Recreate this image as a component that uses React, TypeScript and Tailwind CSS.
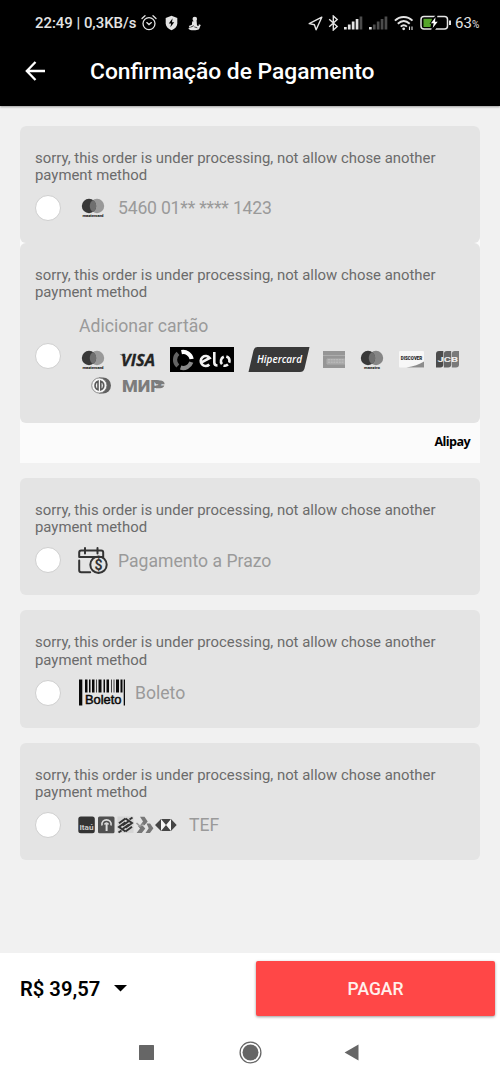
import type { ReactNode } from "react"

const NOTICE = "sorry, this order is under processing, not allow chose another payment method"

function StatusBar() {
  return (
    <div className="flex h-[46px] items-center pl-[35px] text-[#e4e4e4]">
      <span className="w-[106px] whitespace-nowrap text-[14.9px] font-medium">22:49 | 0,3KB/s</span>
      {/* alarm */}
      <svg width="16" height="18" viewBox="0 0 16 18" fill="none" stroke="currentColor" strokeWidth="1.3" strokeLinecap="round">
        <circle cx="8" cy="9.6" r="6" />
        <path d="M1 4.5 4 1.8M15 4.5 12 1.8M5.8 8.6 8 10.6l2.4-2" />
      </svg>
      <svg className="ml-2" width="13" height="16" viewBox="0 0 13 16">
        <path d="M6.5.8 12.3 3v5.2c0 3.2-2.3 5.6-5.8 7C3 13.8.7 11.4.7 8.2V3z" fill="currentColor" />
        <path d="M7.6 3.3 3.8 8.5h2.3l-.7 3.7 3.8-5H7z" fill="#000" />
      </svg>
      <svg className="ml-[10px]" width="13" height="15" viewBox="0 0 13 15" fill="currentColor">
        <circle cx="6.8" cy="3" r="2.3" />
        <path d="M4.2 5.5 8.6 4.6 9 9.5l1.600.4.2-1.700 2 .7-.7 1.600-.8 2.300c-.8 1-2 1.400-4 1.400H3.600C1.700 14.200.6 13.300.5 12l1.300-.3-1-1.700 3.100-1.300z" />
        <path d="M2.400 11.300l3.400-1.600M6.300 10.900l3 .9" stroke="#000" strokeWidth=".7" />
      </svg>

      <svg className="ml-[107px]" width="15" height="15" viewBox="0 0 15 15" fill="none" stroke="currentColor" strokeWidth="1.4" strokeLinejoin="round">
        <path d="M13.8 1.2 1.2 7.6l5.2 1.2 1.7 5z" />
      </svg>
      <svg className="ml-[5px]" width="11" height="16" viewBox="0 0 11 16" fill="none" stroke="currentColor" strokeWidth="1.4">
        <path d="m1.2 4.3 8 7.2-3.9 3.5V1l3.9 3.5-8 7.2" />
      </svg>
      <Signal className="ml-[5px]" strength={4} />
      <Signal className="ml-[6px]" strength={1} />
      <svg className="ml-[6px]" width="20" height="16" viewBox="0 0 20 16" fill="none" stroke="currentColor" strokeWidth="1.9">
        <path d="M.9 5.7c5-5 12.6-5 17.6 0M3.8 8.8c3.7-3.5 8.2-3.5 11.9 0M6.7 11.6c2-1.8 4.2-1.8 6.2 0" />
        <circle cx="9.7" cy="13.8" r="1.4" fill="currentColor" stroke="none" />
        <path d="M15.5 11.5V15M18 11.5V15" strokeWidth="1.1" />
      </svg>
      <svg className="ml-[6px]" width="32" height="16" viewBox="0 0 32 16">
        <rect x="1" y="1.5" width="26.5" height="12.5" rx="3" fill="none" stroke="currentColor" strokeWidth="1.5" />
        <path d="M3.5 3.7H12l-1.500 8.200h-7z" fill="#55a52b" />
        <path d="M15.6 0 9.5 8.8h3.3L11 16h3.6l5-9h-3.3L17.5 0z" fill="#000" />
        <path d="M15.5 2.2 11 8.3h2.7l-1 4.7 5-6.300H15z" fill="#fff" />
        <path d="M30 5.500v4.500" stroke="currentColor" strokeWidth="2" />
      </svg>
      <span className="ml-[3px] text-[15px]">
        63<span className="text-[10px]">%</span>
      </span>
    </div>
  )
}

function Signal({ strength, className }: { strength: number; className: string }) {
  const bars = [2.5, 5, 8, 10.5, 13]
  return (
    <svg className={className} width="19" height="14" viewBox="0 0 19 14">
      {bars.map((h, i) => (
        <rect key={h} x={i * 3.9} y={13.5 - h} width="2.7" height={h} fill={i < strength ? "#e4e4e4" : "#4c4c4c"} />
      ))}
    </svg>
  )
}

function Circles({ label, className, right = "#999" }: { label: string; className?: string; right?: string }) {
  return (
    <svg className={className} width="24" height="20" viewBox="0 0 24 20">
      <circle cx="16" cy="8" r="7.2" fill={right} />
      <circle cx="8" cy="8" r="7.2" fill="#383838" />
      <path d="M12 2a7.2 7.2 0 0 1 0 12 7.2 7.2 0 0 1 0-12z" fill="#6f6f6f" />
      <text x="12" y="19" textAnchor="middle" fontSize="4.3" fontWeight="800" fill="#222" textLength={label === "maestro" ? 16 : 21}>
        {label}
      </text>
    </svg>
  )
}

function CardBrands() {
  return (
    <div className="pl-[2px]">
      <div className="flex h-[26px] items-center">
        <Circles label="mastercard" />
        <svg className="ml-[11px]" width="44" height="20" viewBox="0 0 44 20">
          <path d="M3.5 4.5H8l2 4Q7.500 5.500 3.500 4.500z" fill="#242424" />
          <text x="5" y="15.8" fontFamily="Open Sans" fontSize="15.5" fontStyle="italic" fontWeight="700" fill="#242424" stroke="#242424" strokeWidth=".3" textLength="34" lengthAdjust="spacingAndGlyphs">
            VISA
          </text>
        </svg>
        <svg className="ml-[10px]" width="64" height="25" viewBox="0 0 64 25">
          <path d="M0 0h64v25H0z" fill="#000" />
          <g fill="none" strokeWidth="4.2">
            <path d="M11.5 5.100a8.500 8.500 0 0 1 10.100 6.900" stroke="#fff" />
            <path d="M21.3 15.200a8.500 8.500 0 0 1-10.700 5.400" stroke="#8a8a8a" />
            <path d="M7.8 19a8.500 8.500 0 0 1 .2-12.700" stroke="#636363" />
          </g>
          <g fill="none" stroke="#f2f2f2" strokeWidth="2.6">
            <path d="M31 15.700 39.700 11a5 5 0 1 0-.4 6.500M44.300 5v10.500c0 2 1 3 3.200 3M53.800 9.700a4.700 4.700 0 0 0-1.800 7.400M53.500 18.400a4.700 4.700 0 0 0 4.500-.8M56.300 9.400c2 .6 3.200 2.200 3.200 4.300 0 .8-.1 1.400-.4 2" />
          </g>
        </svg>
        <svg className="ml-[14px]" width="62" height="25" viewBox="0 0 62 25">
          <path d="M9.500 0H61.500L56.500 21.500Q55.500 25 52 25H.5L5.500 3.500Q6.300 0 9.500 0z" fill="#393939" />
          <text x="9" y="16" fontFamily="Open Sans" fontSize="11" fontStyle="italic" fontWeight="600" fill="#fff" textLength="45" lengthAdjust="spacingAndGlyphs">
            Hipercard
          </text>
        </svg>
        <svg className="ml-[13px]" width="22" height="17" viewBox="0 0 22 17">
          <path d="M0 0h22v17H0z" fill="#969696" />
          <path d="M0 4.5h22M4 8h18v5H4z" stroke="#adadad" strokeWidth="1" fill="#a8a8a8" />
          <path d="M5 8.8h16M5 11.2h16" stroke="#c0c0c0" strokeWidth="1" strokeDasharray="2 .7" />
        </svg>
        <Circles className="ml-[15px]" label="maestro" right="#868686" />
        <svg className="ml-[15px]" width="26" height="17" viewBox="0 0 26 17">
          <rect width="25" height="16.5" rx="1" fill="#f7f7f7" />
          <path d="M25 10.5V16.5H7.500Q18 14.800 25 10.500z" fill="#8c8c8c" />
          <text x="1.8" y="9" fontFamily="Roboto" fontSize="4.6" fontWeight="900" fill="#222" textLength="21.5" lengthAdjust="spacingAndGlyphs">
            DISCOVER
          </text>
        </svg>
        <svg className="ml-[11px]" width="23" height="17" viewBox="0 0 23 17">
          <path d="M3 0h4.300v13.500q0 3-3 3H0V3q0-3 3-3z" fill="#4c4c4c" />
          <path d="M10.800 0h4.400v13.500q0 3-3 3H7.900V3q0-3 2.900-3z" fill="#666" />
          <path d="M18.700 0H23v13.500q0 3-3 3h-4.200V3q0-3 2.900-3z" fill="#7a7a7a" />
          <text x="1.5" y="11.3" fontFamily="Roboto" fontSize="8" fontWeight="700" fill="#eee" textLength="20.5" lengthAdjust="spacingAndGlyphs">
            JCB
          </text>
        </svg>
      </div>
      <div className="flex h-[26px] items-center pl-[10px]">
        <svg width="20" height="17" viewBox="0 0 20 17">
          <path d="M8 .5h4a8 8 0 0 1 0 16H8z" fill="#606060" />
          <circle cx="8.3" cy="8.5" r="7.6" fill="#f5f5f5" stroke="#777" strokeWidth=".8" />
          <path d="M7 4.200a4.600 4.600 0 0 0 0 8.600zM9.800 4.200a4.600 4.600 0 0 1 0 8.600z" fill="none" stroke="#5a5a5a" strokeWidth="1.6" />
        </svg>
        <svg className="ml-[9px]" width="47" height="20" viewBox="0 0 47 20">
          <text x="2" y="15.8" fontFamily="Roboto" fontSize="16" fontWeight="900" fill="#7c7c7c" textLength="40" lengthAdjust="spacingAndGlyphs">
            МИР
          </text>
          <path d="M34 4.400h7q3.500.4 3.600 3.800H36z" fill="#7c7c7c" />
          <path d="M36 9.500h8.300q-1 2.800-4 2.800H36z" fill="#7c7c7c" />
        </svg>
      </div>
    </div>
  )
}

function InstallmentIcon() {
  return (
    <svg width="30" height="27" viewBox="0 0 30 27" fill="none" stroke="#333" strokeWidth="2" strokeLinecap="round">
      <path d="M1.2 10V5.500q0-2 2-2h20q2 0 2 2V10h-24M1.200 13.500v9.800q0 2 2 2h9M7 1v5.500M19.500 1v5.500" />
      <circle cx="20.5" cy="17.7" r="8.2" />
      <text x="20.5" y="22.7" textAnchor="middle" fontSize="14" fontWeight="700" fill="#333" stroke="none">
        $
      </text>
    </svg>
  )
}

function BoletoIcon() {
  const bars = [[6, 2.5], [10, 1.5], [13, 2.5], [17, 1], [19.5, 3], [24.5, 1.5], [27.5, 2.5], [32, 1], [34.5, 1], [37, 3], [41.5, 2]]
  return (
    <svg width="46" height="27" viewBox="0 0 46 27">
      <path d="M0 .5h3.300v26H0zM44.700.5H46v26h-1.300z" fill="#0a0a0a" />
      {bars.map(([x, w]) => (
        <rect key={x} x={x} y=".5" width={w} height="13" fill={w === 1 ? "#444" : "#0a0a0a"} />
      ))}
      <text x="6" y="25" fontFamily="Liberation Sans" fontSize="12.5" fill="#0a0a0a" stroke="#0a0a0a" strokeWidth=".5" textLength="36.5" lengthAdjust="spacingAndGlyphs">
        Boleto
      </text>
    </svg>
  )
}

function BankIcons() {
  return (
    <svg width="99" height="18" viewBox="0 0 99 18">
      <rect x=".3" y=".5" width="16.5" height="16.8" rx="2.5" fill="#343434" />
      <text x="1.5" y="14" fontSize="8" fontWeight="700" fill="#ccc" textLength="14" lengthAdjust="spacingAndGlyphs">
        Itaú
      </text>
      <rect x="20" y=".5" width="16.5" height="16.8" rx="1.5" fill="#515151" />
      <path d="M24 9.500c-1.500-7.500 10.500-7.500 9 0M26.500 8.500q2-3 4 0" fill="none" stroke="#ddd" strokeWidth="1.6" />
      <path d="M27.600 7.500h2v7.500h-2z" fill="#ddd" />
      <path d="M39.500.5h16v16.500h-16z" fill="#d5d5d5" />
      <g fill="none" stroke="#333" strokeWidth="2">
        <path d="m47.500 2.500 6.500 4.500-6.500 4.800M47.500 15.500 41 11l6.500-4.800" />
        <path d="M41 7.300l6.500-4.800M54 10.700l-6.500 4.800M44.500 9.500l6.500-4.500M44.500 13l6.500-4.500M51.500 3.500l3-2M40.500 16.500l3-2" />
      </g>
      <g fill="#777">
        <path d="M62 .8h4.500l3.200 4.600-3.200 3.800H62.200l2.800-3.800z" />
        <path d="M60 10h5l2.300 2.400-3.500 4.500H58.600l3.400-4.500z" />
        <path d="M68.500 7.500h3.600l3.300 4.800-3.400 4.600h-4.500l3.200-4.600z" />
      </g>
      <path d="m58.500 7 3.500 3.300 3.500-2.500" fill="none" stroke="#999" strokeWidth="1.6" />
      <path d="M83 3h10v12H83z" fill="#f7f7f7" />
      <path d="M77 9l6-6v12zM98.700 9 93 3v12zM83 3h10L88 9zM83 15h10L88 9z" fill="#454545" />
    </svg>
  )
}

function Radio() {
  return <span className="size-[26px] shrink-0 rounded-full border border-[#cfcfcf] bg-white" />
}

function Notice() {
  return <p className="text-[14.9px] leading-[17.5px] text-[#6b6b6b]">{NOTICE}</p>
}

function PaymentCard({ children }: { children: ReactNode }) {
  return (
    <div className="h-[117.4px] rounded-[6px] bg-[#e4e4e4] px-[15px] pt-[24px]">
      <Notice />
      <div className="flex h-[47px] items-center text-[17.6px] text-[#9a9a9a]">
        <Radio />
        {children}
      </div>
    </div>
  )
}

export default function App() {
  return (
    <div className="flex h-[1082px] w-[500px] flex-col bg-[#f1f1f1] font-[Roboto,sans-serif]">
      <header className="h-[106px] bg-black shadow-[0_1px_2px_rgba(0,0,0,0.35)]">
        <StatusBar />
        <div className="flex h-[50px] items-center pl-[25px] text-white">
          <svg width="21" height="20" viewBox="0 0 21 20" fill="none" stroke="currentColor" strokeWidth="2.3">
            <path d="M20 10H2M10.500 1 1.800 10l8.700 9" />
          </svg>
          <h1 className="ml-[44px] pt-[3px] text-[22.8px] font-medium">Confirmação de Pagamento</h1>
        </div>
      </header>

      <main className="flex flex-1 flex-col gap-[15px] px-5 pt-[19.5px]">
        <section className="rounded-t-[6px] bg-[#fbfbfb]">
          <PaymentCard>
            <Circles className="ml-[20px]" label="mastercard" />
            <span className="ml-[13px] tracking-[-0.2px]">5460 01** **** 1423</span>
          </PaymentCard>
          <div className="h-[180px] rounded-[6px] bg-[#e4e4e4] pl-[15px] pt-[24px]">
            <div className="pr-[15px]">
              <Notice />
            </div>
            <div className="mt-[12px] flex items-center">
              <Radio />
              <div className="ml-[18px]">
                <div className="h-[33px] text-[17.6px] leading-[24px] text-[#9a9a9a]">Adicionar cartão</div>
                <CardBrands />
              </div>
            </div>
          </div>
          <div className="flex h-10 items-center justify-end pr-[10px] font-['Open_Sans',sans-serif] text-[12.6px] font-bold tracking-[-0.6px] text-black">
            Alipay
          </div>
        </section>

        <PaymentCard>
          <span className="ml-[17px]">
            <InstallmentIcon />
          </span>
          <span className="ml-[10px] pt-px">Pagamento a Prazo</span>
        </PaymentCard>
        <PaymentCard>
          <span className="ml-[18px]">
            <BoletoIcon />
          </span>
          <span className="ml-[10px]">Boleto</span>
        </PaymentCard>
        <PaymentCard>
          <span className="ml-[17px]">
            <BankIcons />
          </span>
          <span className="ml-[12px]">TEF</span>
        </PaymentCard>
      </main>

      <footer className="h-[129px] bg-white">
        <div className="flex h-[71px] items-center pl-5 pr-[5px]">
          <span className="pt-px text-[20.2px] font-semibold text-black">R$ 39,57</span>
          <svg className="ml-[14px]" width="13" height="7" viewBox="0 0 13 7">
            <path d="M0 0h13L6.500 6.500z" fill="#000" />
          </svg>
          <button className="ml-auto h-[55px] w-[239px] rounded-[2px] bg-[#ff4747] pt-px text-[17.5px] font-medium text-[#fff0ec] shadow-[0_1px_3px_rgba(0,0,0,0.4)]">
            PAGAR
          </button>
        </div>
        {/* android navigation */}
        <nav className="flex h-[58px] items-start pl-[139px] pt-[17px]">
          <svg className="mt-[4px]" width="15" height="15" viewBox="0 0 15 15">
            <rect width="15" height="15" rx=".5" fill="#666" />
          </svg>
          <svg className="ml-[85px]" width="23" height="23" viewBox="0 0 23 23">
            <circle cx="11.5" cy="11.5" r="10.4" fill="none" stroke="#666" strokeWidth="1.3" />
            <circle cx="11.5" cy="11.5" r="8" fill="#666" />
          </svg>
          <svg className="ml-[82px] mt-[3px]" width="15" height="17" viewBox="0 0 15 17">
            <path d="M14.500.5v16L.6 8.500z" fill="#666" />
          </svg>
        </nav>
      </footer>
    </div>
  )
}
